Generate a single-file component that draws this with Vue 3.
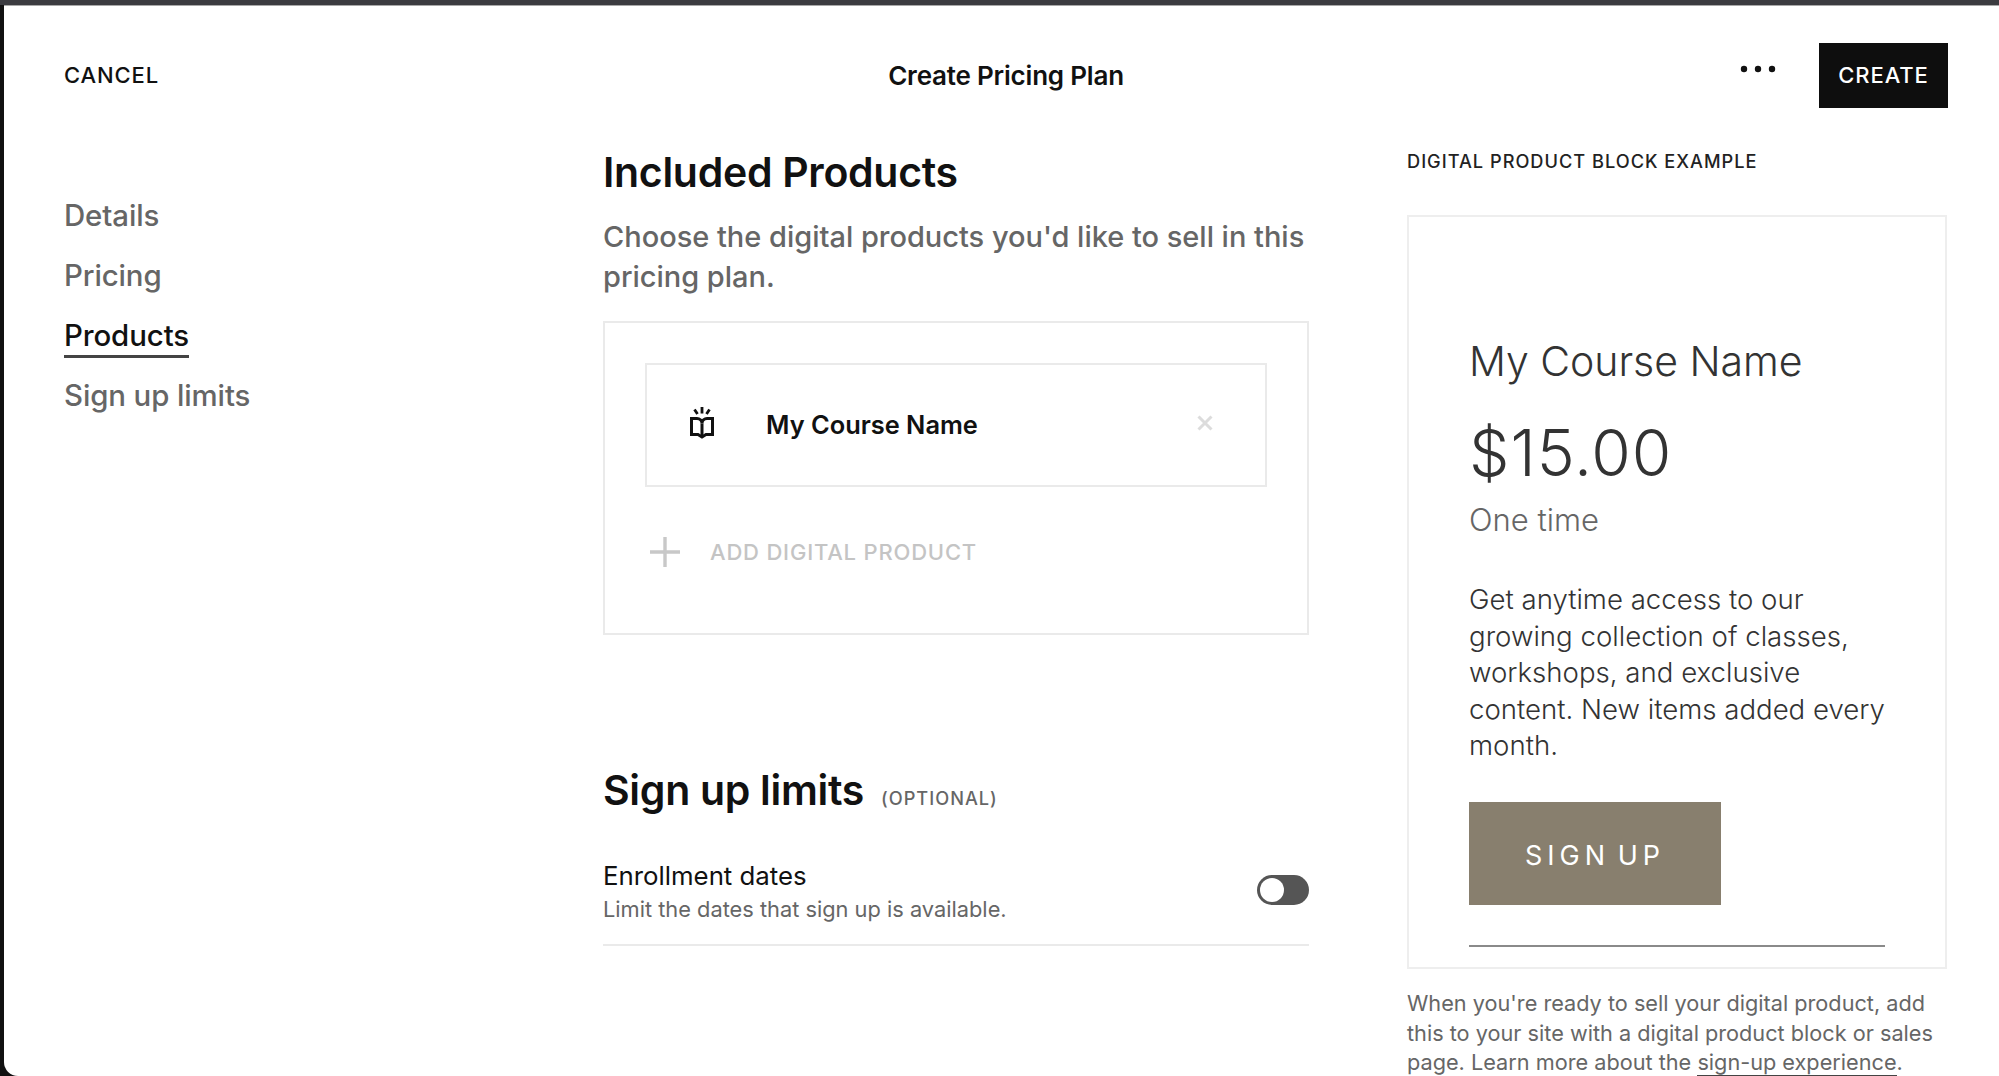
<script setup>
const navItems = [
  { label: 'Details', active: false },
  { label: 'Pricing', active: false },
  { label: 'Products', active: true },
  { label: 'Sign up limits', active: false },
]
const descLines = [
  'Get anytime access to our',
  'growing collection of classes,',
  'workshops, and exclusive',
  'content. New items added every',
  'month.',
]
</script>

<template>
  <div class="screen">
    <div class="panel">
      <header class="top">
        <a class="cancel">CANCEL</a>
        <div class="title">Create Pricing Plan</div>
        <div class="actions">
          <svg class="dots" width="36" height="8" viewBox="0 0 36 8"><circle cx="4" cy="4" r="3.2" /><circle cx="18" cy="4" r="3.2" /><circle cx="32" cy="4" r="3.2" /></svg>
          <button class="create">CREATE</button>
        </div>
      </header>

      <div class="body">
        <nav class="nav">
          <a v-for="item in navItems" :key="item.label" class="nav-item" :class="{ active: item.active }">{{ item.label }}</a>
        </nav>

        <main class="main">
          <h2 class="h">Included Products</h2>
          <p class="lead">Choose the digital products you'd like to sell in this<br />pricing plan.</p>
          <section class="box">
            <div class="product">
              <svg class="book" width="26" height="32" viewBox="0 0 26 32" fill="none" stroke="#111" stroke-width="3">
                <path d="M13 0v6.500M5.500 2.500l3 4.500M20.500 2.500l-3 4.500" stroke-width="2.800" />
                <path d="M2.500 11.500h5.500c2.500 0 5 2 5 5 0-3 2.500-5 5-5h5.500v16h-6.500l-4 2.500-4-2.500H2.500z" />
                <path d="M13 16.500v13" />
              </svg>
              <span class="product-name">My Course Name</span>
              <svg class="remove" width="16" height="16" viewBox="0 0 16 16" stroke="#dcdcdc" stroke-width="3" fill="none"><path d="M1.500 1.500l13 13M14.500 1.500l-13 13" /></svg>
            </div>
            <div class="add">
              <svg width="30" height="30" viewBox="0 0 30 30" stroke="#c8c8c8" stroke-width="3.400" fill="none"><path d="M15 0v30M0 15h30" /></svg>
              <span>ADD DIGITAL PRODUCT</span>
            </div>
          </section>

          <div class="limits-head">
            <h2 class="h">Sign up limits</h2>
            <span class="optional">(OPTIONAL)</span>
          </div>
          <div class="row">
            <div>
              <div class="row-title">Enrollment dates</div>
              <div class="row-sub">Limit the dates that sign up is available.</div>
            </div>
            <span class="toggle"><span class="knob"></span></span>
          </div>
        </main>

        <aside class="aside">
          <div class="aside-label">DIGITAL PRODUCT BLOCK EXAMPLE</div>
          <div class="card">
            <div class="card-name">My Course Name</div>
            <div class="card-price">$15.00</div>
            <div class="card-freq">One time</div>
            <div class="card-desc">
              <div v-for="line in descLines" :key="line">{{ line }}</div>
            </div>
            <div class="signup">SIGN UP</div>
            <div class="card-line"></div>
          </div>
          <p class="foot">When you're ready to sell your digital product, add<br />this to your site with a digital product block or sales<br />page. Learn more about the <a class="link">sign-up experience</a>.</p>
        </aside>
      </div>
    </div>
  </div>
</template>

<style>
html, body { margin: 0; background: #111; overflow: hidden; }
</style>

<style scoped>
.screen {
  width: 1999px;
  height: 1076px;
  overflow: hidden;
  background: #111;
  box-sizing: border-box;
  border-top: 5px solid #3b3b40;
  font-family: Inter, "Liberation Sans", sans-serif;
  color: #111;
}
.panel {
  margin-left: 4px;
  height: 1071px;
  background: #fff;
  border-bottom-left-radius: 14px;
  overflow: hidden;
  border-top: 1px solid #a8a8a8;
  box-sizing: border-box;
}
.top {
  display: grid;
  grid-template-columns: 1fr auto 1fr;
  align-items: center;
  padding: 37px 51px 0 60px;
  height: 102px;
  box-sizing: border-box;
}
.cancel { font-size: 22px; font-weight: 500; letter-spacing: 0.9px; margin-top: -2px; }
.title { font-size: 26px; font-weight: 600; letter-spacing: -0.2px; }
.actions { display: flex; justify-content: flex-end; align-items: center; gap: 42px; }
.dots { fill: #111; margin-bottom: 13px; margin-right: 1px; }
.create {
  width: 129px;
  height: 65px;
  border: 0;
  background: #0e0e0e;
  color: #fff;
  font: 500 22px Inter, sans-serif;
  letter-spacing: 0.9px;
  padding-bottom: 2px;
}
.body {
  display: grid;
  grid-template-columns: 539px 706px 539px;
  column-gap: 0;
  padding-left: 60px;
}
.nav { display: flex; flex-direction: column; align-items: flex-start; gap: 20px; padding-top: 88px; }
.nav-item {
  font-size: 29.4px;
  line-height: 40px;
  font-weight: 500;
  color: #666;
  letter-spacing: -0.1px;
}
.nav-item.active { color: #111; box-shadow: inset 0 -1px 0 #444, 0 2px 0 #444; }
.main { padding-top: 39px; }
.h { margin: 0; font-size: 41px; line-height: 50px; font-weight: 600; letter-spacing: -0.3px; color: #111; }
.lead { margin: 20px 0 0; font-size: 29px; line-height: 40px; font-weight: 500; color: #666; letter-spacing: -0.02px; }
.box {
  margin-top: 24px;
  width: 706px;
  height: 314px;
  box-sizing: border-box;
  border: 2px solid #eaeaea;
  padding: 40px 40px 0 40px;
}
.product {
  height: 124px;
  box-sizing: border-box;
  border: 2px solid #eaeaea;
  display: flex;
  align-items: center;
  padding: 0 52px 0 42px;
}
.book { flex: none; margin-top: -5px; }
.product-name { margin-left: 51px; font-size: 25.4px; font-weight: 600; flex: 1; margin-top: -2px; }
.remove { margin-top: -4px; }
.add {
  display: flex;
  align-items: center;
  gap: 30px;
  margin: 50px 0 0 5px;
  color: #c4c4c4;
  font-size: 22px;
  font-weight: 500;
  letter-spacing: 0.8px;
}
.limits-head { display: flex; align-items: baseline; gap: 17px; margin-top: 130px; }
.optional { font-size: 18.2px; font-weight: 500; letter-spacing: 1px; color: #666; }
.row {
  margin-top: 44px;
  height: 85px;
  width: 706px;
  border-bottom: 2px solid #eaeaea;
  display: flex;
  justify-content: space-between;
  align-items: flex-start;
}
.row-title { font-size: 25.8px; line-height: 34px; font-weight: 400; }
.row-sub { font-size: 21.8px; line-height: 33px; color: #666; }
.toggle {
  margin-top: 16px;
  width: 52px;
  height: 30px;
  border-radius: 15px;
  background: #555;
  position: relative;
  display: block;
}
.knob {
  position: absolute;
  left: 3px;
  top: 3px;
  width: 24px;
  height: 24px;
  border-radius: 50%;
  background: #fff;
}
.aside { padding: 41px 0 0 98px; width: 540px; box-sizing: content-box; }
.aside-label { font-size: 18.2px; line-height: 24px; font-weight: 500; letter-spacing: 1px; color: #222; white-space: nowrap; }
.card {
  margin-top: 42px;
  width: 540px;
  height: 754px;
  box-sizing: border-box;
  border: 2px solid #eeeeee;
  padding: 117px 60px 0;
  color: #333;
  font-weight: 300;
}
.card-name { font-size: 41px; line-height: 54px; letter-spacing: -0.05px; }
.card-price { font-size: 64px; line-height: 80px; margin-top: 25px; letter-spacing: 1px; }
.card-freq { font-size: 31px; line-height: 40px; margin-top: 7px; color: #666; }
.card-desc { font-size: 27.6px; line-height: 36.6px; margin-top: 41px; white-space: nowrap; }
.signup {
  margin-top: 38px;
  width: 252px;
  height: 103px;
  box-sizing: border-box;
  padding-top: 4px;
  background: #887f6e;
  color: #fff;
  font-size: 27px;
  font-weight: 400;
  letter-spacing: 5px;
  word-spacing: -5px;
  display: flex;
  align-items: center;
  justify-content: center;
}
.card-line { margin-top: 40px; width: 416px; border-top: 2px solid #8a8a8a; }
.foot { margin: 20px 0 0; font-size: 21.7px; line-height: 29.5px; color: #666; white-space: nowrap; }
.link { border-bottom: 2px solid #444; }
</style>
